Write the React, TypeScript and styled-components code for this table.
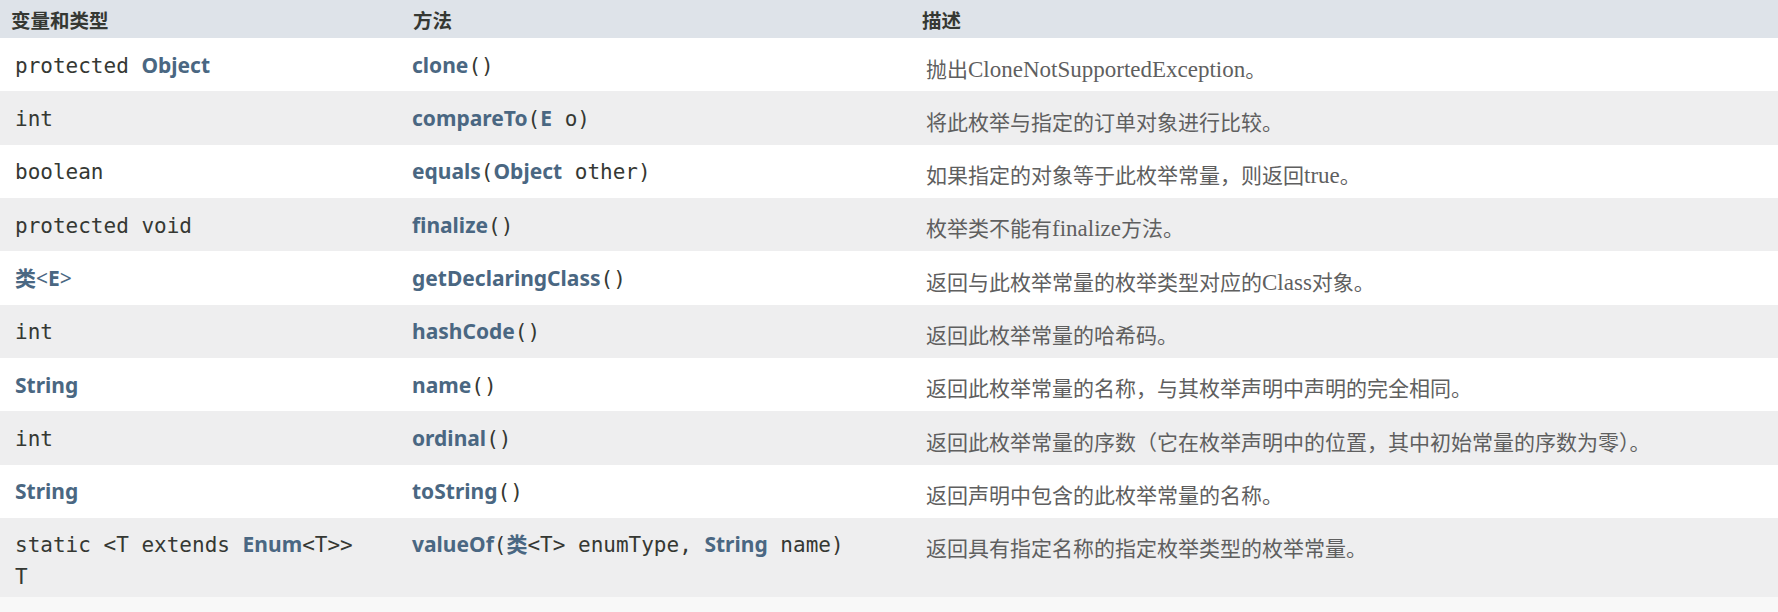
import React, { FunctionComponent, ReactNode } from 'react';
import styled, { createGlobalStyle } from 'styled-components';

const GlobalStyle = createGlobalStyle`
  html, body {
    margin: 0;
    padding: 0;
    background: #f8f8f8;
  }
  body {
    font-family: "Noto Sans", "Noto Sans CJK SC", sans-serif;
  }
`;

const COLUMNS = '400px 510px 1fr';

const Table = styled.div`
  width: 100%;
  display: flex;
  flex-direction: column;
`;

const Row = styled.div<{ $alt?: boolean }>`
  display: grid;
  grid-template-columns: ${COLUMNS};
  background: ${(p) => (p.$alt ? '#eeeeef' : '#ffffff')};
`;

const HeadRow = styled.div`
  display: grid;
  grid-template-columns: ${COLUMNS};
  height: 38px;
  background: #dee3e9;
`;

const HeadCell = styled.div<{ $pad: number }>`
  display: flex;
  align-items: center;
  padding-left: ${(p) => p.$pad}px;
  padding-top: 1px;
  font-family: "Noto Sans CJK SC", sans-serif;
  font-weight: 700;
  font-size: 19.5px;
  color: #353833;
`;

const Cell = styled.div`
  padding: 13.67px 0;
  font-family: "Noto Sans", "Noto Sans CJK SC", sans-serif;
  font-size: 21px;
  line-height: 26px;
  color: #353833;
  white-space: nowrap;
`;

const TypeCell = styled(Cell)<{ $multi?: boolean }>`
  padding-left: 15px;
  padding-bottom: ${(p) => (p.$multi ? '8px' : '13.67px')};
`;

const NextLine = styled.span`
  display: block;
  margin-top: 5.5px;
`;

const MethodCell = styled(Cell)`
  padding-left: 12px;
`;

const DescCell = styled(Cell)`
  padding: 16.5px 0 10px 16px;
  font-family: "Noto Sans CJK SC", sans-serif;
  font-size: 21px;
  color: #5f5f5f;
`;

const Mono = styled.span`
  font-family: "DejaVu Sans Mono", "Noto Sans CJK SC", monospace;
  font-size: 21px;
  line-height: 20px;
  color: #353833;
`;

const Link = styled.span<{ $plain?: boolean }>`
  font-family: "Noto Sans", "Noto Sans CJK SC", sans-serif;
  font-weight: ${(p) => (p.$plain ? 400 : 700)};
  color: #4a6782;
`;

const Latin = styled.span`
  font-family: "Liberation Serif", serif;
  font-size: 23px;
  line-height: 20px;
`;

interface Member {
  type: ReactNode;
  method: ReactNode;
  desc: ReactNode;
  multi?: boolean;
}

const members: Member[] = [
  {
    type: <><Mono>protected </Mono><Link>Object</Link></>,
    method: <><Link>clone</Link><Mono>()</Mono></>,
    desc: <>抛出<Latin>CloneNotSupportedException</Latin>。</>,
  },
  {
    type: <Mono>int</Mono>,
    method: <><Link>compareTo</Link><Mono>(</Mono><Link>E</Link><Mono> o)</Mono></>,
    desc: '将此枚举与指定的订单对象进行比较。',
  },
  {
    type: <Mono>boolean</Mono>,
    method: <><Link>equals</Link><Mono>(</Mono><Link>Object</Link><Mono> other)</Mono></>,
    desc: <>如果指定的对象等于此枚举常量，则返回<Latin>true</Latin>。</>,
  },
  {
    type: <Mono>protected void</Mono>,
    method: <><Link>finalize</Link><Mono>()</Mono></>,
    desc: <>枚举类不能有<Latin>finalize</Latin>方法。</>,
  },
  {
    type: <><Link>类</Link><Link $plain>&lt;</Link><Link>E</Link><Link $plain>&gt;</Link></>,
    method: <><Link>getDeclaringClass</Link><Mono>()</Mono></>,
    desc: <>返回与此枚举常量的枚举类型对应的<Latin>Class</Latin>对象。</>,
  },
  {
    type: <Mono>int</Mono>,
    method: <><Link>hashCode</Link><Mono>()</Mono></>,
    desc: '返回此枚举常量的哈希码。',
  },
  {
    type: <Link>String</Link>,
    method: <><Link>name</Link><Mono>()</Mono></>,
    desc: '返回此枚举常量的名称，与其枚举声明中声明的完全相同。',
  },
  {
    type: <Mono>int</Mono>,
    method: <><Link>ordinal</Link><Mono>()</Mono></>,
    desc: '返回此枚举常量的序数（它在枚举声明中的位置，其中初始常量的序数为零）。',
  },
  {
    type: <Link>String</Link>,
    method: <><Link>toString</Link><Mono>()</Mono></>,
    desc: '返回声明中包含的此枚举常量的名称。',
  },
  {
    type: (
      <>
        <Mono>static &lt;T extends </Mono><Link>Enum</Link><Mono>&lt;T&gt;&gt;</Mono>
        <NextLine><Mono>T</Mono></NextLine>
      </>
    ),
    method: (
      <>
        <Link>valueOf</Link><Mono>(</Mono><Link>类</Link><Mono>&lt;T&gt; enumType, </Mono>
        <Link>String</Link><Mono> name)</Mono>
      </>
    ),
    desc: '返回具有指定名称的指定枚举类型的枚举常量。',
    multi: true,
  },
];

const App: FunctionComponent = () => (
  <>
    <GlobalStyle />
    <Table>
      <HeadRow>
        <HeadCell $pad={11}>变量和类型</HeadCell>
        <HeadCell $pad={13}>方法</HeadCell>
        <HeadCell $pad={12}>描述</HeadCell>
      </HeadRow>
      {members.map(({ type, method, desc, multi }, key) => (
        <Row key={key} $alt={key % 2 === 1}>
          <TypeCell $multi={multi}>{type}</TypeCell>
          <MethodCell>{method}</MethodCell>
          <DescCell>{desc}</DescCell>
        </Row>
      ))}
    </Table>
  </>
);

export default App;
